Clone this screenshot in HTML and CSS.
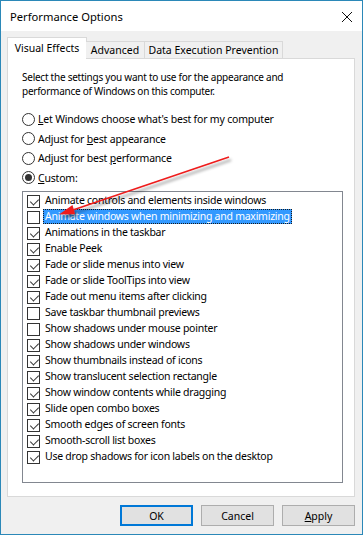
FILE: index.html
```html
<!DOCTYPE html>
<html>
<head>
<meta charset="utf-8">
<link rel="stylesheet" href="styles.css">
</head>
<body>
<div class="window">
  <div class="titlebar">
    <span class="title">Performance Options</span>
    <svg class="close" width="12" height="12" viewBox="0 0 12 12"><path d="M1 1 L11 11 M11 1 L1 11" stroke="#111" stroke-width="1" fill="none"/></svg>
  </div>
  <div class="body">
    <div class="tabs">
      <div class="tab active">Visual Effects</div>
      <div class="tab t2">Advanced</div>
      <div class="tab t3">Data Execution Prevention</div>
    </div>
    <div class="panel">
      <p class="intro">Select the settings you want to use for the appearance and<br>performance of Windows on this computer.</p>
      <div class="radios">
        <div class="radio"><span class="rb"></span><span><u>L</u>et Windows choose what's best for my computer</span></div>
        <div class="radio"><span class="rb"></span><span>Adjust for <u>b</u>est appearance</span></div>
        <div class="radio"><span class="rb"></span><span>Adjust for best <u>p</u>erformance</span></div>
        <div class="radio"><span class="rb on"></span><span><u>C</u>ustom:</span></div>
      </div>
      <div class="listbox">
        <div class="item"><span class="cb on"></span><span class="lbl">Animate controls and elements inside windows</span></div>
        <div class="item"><span class="cb"></span><span class="lbl sel">Animate windows when minimizing and maximizing</span></div>
        <div class="item"><span class="cb on"></span><span class="lbl">Animations in the taskbar</span></div>
        <div class="item"><span class="cb on"></span><span class="lbl">Enable Peek</span></div>
        <div class="item"><span class="cb on"></span><span class="lbl">Fade or slide menus into view</span></div>
        <div class="item"><span class="cb on"></span><span class="lbl">Fade or slide ToolTips into view</span></div>
        <div class="item"><span class="cb on"></span><span class="lbl">Fade out menu items after clicking</span></div>
        <div class="item"><span class="cb"></span><span class="lbl">Save taskbar thumbnail previews</span></div>
        <div class="item"><span class="cb"></span><span class="lbl">Show shadows under mouse pointer</span></div>
        <div class="item"><span class="cb on"></span><span class="lbl">Show shadows under windows</span></div>
        <div class="item"><span class="cb on"></span><span class="lbl">Show thumbnails instead of icons</span></div>
        <div class="item"><span class="cb on"></span><span class="lbl">Show translucent selection rectangle</span></div>
        <div class="item"><span class="cb on"></span><span class="lbl">Show window contents while dragging</span></div>
        <div class="item"><span class="cb on"></span><span class="lbl">Slide open combo boxes</span></div>
        <div class="item"><span class="cb on"></span><span class="lbl">Smooth edges of screen fonts</span></div>
        <div class="item"><span class="cb on"></span><span class="lbl">Smooth-scroll list boxes</span></div>
        <div class="item"><span class="cb on"></span><span class="lbl">Use drop shadows for icon labels on the desktop</span></div>
      </div>
    </div>
    <div class="buttons">
      <div class="btn default">OK</div>
      <div class="btn">Cancel</div>
      <div class="btn"><u>A</u>pply</div>
    </div>
  </div>
  <svg class="arrow" width="363" height="535" viewBox="0 0 363 535">
    <defs>
      <filter id="sh" x="-20%" y="-20%" width="140%" height="160%">
        <feDropShadow dx="2" dy="3" stdDeviation="1.5" flood-color="#000" flood-opacity="0.45"/>
      </filter>
    </defs>
    <g filter="url(#sh)">
      <line x1="229" y1="157" x2="70" y2="211" stroke="#ee1c1c" stroke-width="1.6"/>
      <polygon points="59,214.5 75,214 72.5,205" fill="#ee1c1c"/>
    </g>
  </svg>
</div>
</body>
</html>
```
FILE: styles.css
```css
* { box-sizing: border-box; }
html, body { margin: 0; padding: 0; }
body {
  font-family: "Noto Sans", "Open Sans", sans-serif;
  font-size: 10.5px;
  color: #000;
  background: #fff;
}
.window {
  position: relative;
  width: 363px;
  height: 535px;
  border: 1px solid #2b88b8;
  background: #f0f0f0;
  display: flex;
  flex-direction: column;
}
.titlebar {
  height: 30px;
  background: #fff;
  display: flex;
  align-items: center;
  justify-content: space-between;
  padding: 0 9px 0 9px;
}
.title {
  font-size: 11.2px;
  color: #000;
  margin-top: 1px;
}
.close { margin-top: 1px; }
.body {
  padding: 6px 7px 8px 6px;
  display: flex;
  flex-direction: column;
}
.tabs {
  display: flex;
  align-items: flex-end;
  height: 21px;
  position: relative;
  z-index: 2;
}
.tab {
  height: 17px;
  border: 1px solid #d9d9d9;
  border-bottom: none;
  background: #f0f0f0;
  display: flex;
  align-items: center;
  justify-content: center;
  line-height: 1;
}
.tab.active {
  width: 80px;
  height: 22px;
  margin-bottom: -1px;
  background: #fff;
  padding-bottom: 1px;
}
.t2 { width: 59px; margin-left: -1px; border-left: none; }
.t3 { width: 139px; margin-left: -1px; }
.panel {
  width: 348px;
  height: 439px;
  border: 1px solid #d9d9d9;
  background: #fff;
  padding: 11px 0 0 14px;
}
.intro {
  margin: 0;
  line-height: 14px;
  font-size: 10px;
  letter-spacing: -0.25px;
}
.radios {
  margin-top: 11px;
  display: flex;
  flex-direction: column;
  letter-spacing: -0.2px;
}
.radio {
  display: flex;
  align-items: center;
  height: 20px;
}
.radio:nth-child(even) { height: 19px; }
.rb {
  width: 13px;
  height: 13px;
  border: 1px solid #333;
  border-radius: 50%;
  background: #fff;
  margin-right: 3px;
  display: flex;
  align-items: center;
  justify-content: center;
  flex-shrink: 0;
}
.rb.on::after {
  content: "";
  width: 7px;
  height: 7px;
  border-radius: 50%;
  background: #333;
}
.listbox {
  margin-top: 4px;
  width: 321px;
  height: 292px;
  border: 1px solid #828790;
  background: #fff;
  display: flex;
  flex-direction: column;
  letter-spacing: -0.25px;
}
.item {
  height: 16px;
  display: flex;
  align-items: center;
  padding-left: 4px;
}
.item:first-child { margin-top: 1px; }
.cb {
  width: 13px;
  height: 13px;
  border: 1px solid #333;
  background: #fff;
  flex-shrink: 0;
  margin-right: 3px;
  position: relative;
}
.cb.on::after {
  content: "";
  position: absolute;
  left: 2px;
  top: 0px;
  width: 7px;
  height: 4px;
  border-left: 1px solid #333;
  border-bottom: 1px solid #333;
  transform: translate(0.5px, 2.5px) rotate(-45deg);
  transform-origin: center;
}
.lbl {
  align-self: flex-start;
  height: 15px;
  line-height: 15px;
  padding: 0 2px;
  white-space: nowrap;
}
.lbl.sel {
  background: #3399ff;
  color: #fff;
  outline: 1px dotted #1a1a1a;
  outline-offset: -1px;
}
.buttons {
  margin-top: 8px;
  display: flex;
  justify-content: flex-end;
  gap: 8px;
  width: 348px;
}
.btn {
  width: 73px;
  height: 21px;
  border: 1px solid #adadad;
  background: #e1e1e1;
  display: flex;
  align-items: center;
  justify-content: center;
}
.btn.default {
  border: 2px solid #0078d7;
}
.arrow {
  position: absolute;
  left: -1px;
  top: -1px;
  pointer-events: none;
  z-index: 5;
}
```
